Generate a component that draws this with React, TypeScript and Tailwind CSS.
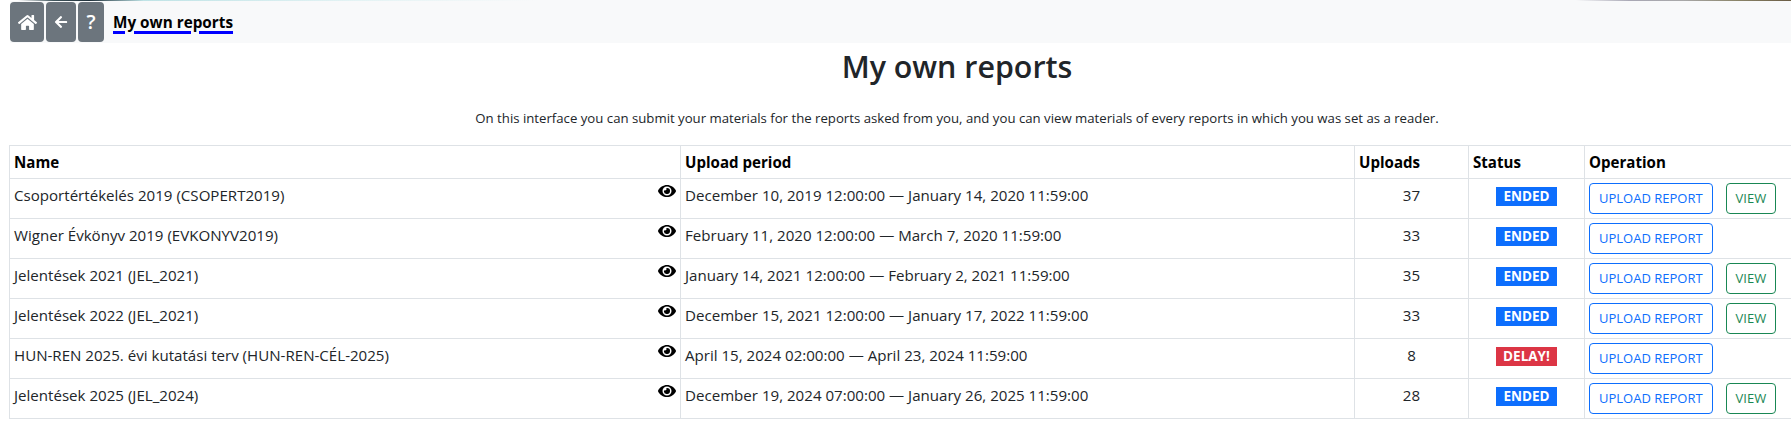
import { FaHome, FaArrowLeft, FaEye } from "react-icons/fa";

const ROWS = [
  { name: "Csoportértékelés 2019 (CSOPERT2019)", period: "December 10, 2019 12:00:00 — January 14, 2020 11:59:00", uploads: 37, status: "ENDED", view: true },
  { name: "Wigner Évkönyv 2019 (EVKONYV2019)", period: "February 11, 2020 12:00:00 — March 7, 2020 11:59:00", uploads: 33, status: "ENDED", view: false },
  { name: "Jelentések 2021 (JEL_2021)", period: "January 14, 2021 12:00:00 — February 2, 2021 11:59:00", uploads: 35, status: "ENDED", view: true },
  { name: "Jelentések 2022 (JEL_2021)", period: "December 15, 2021 12:00:00 — January 17, 2022 11:59:00", uploads: 33, status: "ENDED", view: true },
  { name: "HUN-REN 2025. évi kutatási terv (HUN-REN-CÉL-2025)", period: "April 15, 2024 02:00:00 — April 23, 2024 11:59:00", uploads: 8, status: "DELAY!", view: false },
  { name: "Jelentések 2025 (JEL_2024)", period: "December 19, 2024 07:00:00 — January 26, 2025 11:59:00", uploads: 28, status: "ENDED", view: true },
];

export default function App() {
  return (
    <div className="h-[423px] overflow-hidden bg-white text-[#212529] font-['Open_Sans','Noto_Sans',sans-serif] text-[15.1px]">
      {/* Sliver of the banner image above the nav */}
      <div className="h-px bg-[linear-gradient(90deg,#ffffff_0%,#ffffff_1%,#40555c_3%,#20303a_5%,#bfe3e6_8%,#e4f3f4_20%,#f8f9fa_30%,#f8f9fa_88%,#a9a8b5_91%,#a8a8a8_94%,#8a8468_97%,#6a5c44_100%)]" />

      {/* Nav strip */}
      <div className="h-[42px] ml-[10px] bg-[#f8f9fa] flex items-center gap-[2px]">
        <button className="w-[34px] h-[40px] rounded bg-[#6c757d] text-white flex items-center justify-center"><FaHome size={19} /></button>
        <button className="w-[30px] h-[40px] rounded bg-[#6c757d] text-white flex items-center justify-center"><FaArrowLeft size={14} /></button>
        <button className="w-[26px] h-[40px] rounded bg-[#6c757d] text-white flex items-center justify-center text-[20px] font-semibold">?</button>
        <span className="ml-[7px] text-[15.3px] font-bold text-black underline decoration-[#0000ff] decoration-[3px] underline-offset-[3px]">My own reports</span>
      </div>

      {/* Intro, centred in the column right of the side gutter */}
      <div className="ml-[123px] text-center">
        <h1 className="text-[30.4px] font-semibold leading-[38px] mt-[5px]">My own reports</h1>
        <p className="text-[13.2px] leading-[18px] mt-[23px] mb-[18px]">On this interface you can submit your materials for the reports asked from you, and you can view materials of every reports in which you was set as a reader.</p>
      </div>

      <table className="ml-[9px] w-[1790px] table-fixed border-collapse">
        <thead>
          <tr className="h-[33px] font-bold text-black">
            <th className="w-[671px] border border-[#dee2e6] px-1 text-left">Name</th>
            <th className="w-[674px] border border-[#dee2e6] px-1 text-left">Upload period</th>
            <th className="w-[114px] border border-[#dee2e6] px-1 text-left">Uploads</th>
            <th className="w-[116px] border border-[#dee2e6] px-1 text-left">Status</th>
            <th className="border border-[#dee2e6] px-1 text-left">Operation</th>
          </tr>
        </thead>
        <tbody>
          {ROWS.map((r) => (
            <tr key={r.name} className="h-[40px]">
              <td className="border border-[#dee2e6] px-1">
                <div className="flex items-center justify-between">
                  <span className="-mt-[7px]">{r.name}</span>
                  <FaEye size={18} className="text-black -mt-[14px]" />
                </div>
              </td>
              <td className="border border-[#dee2e6] px-1"><span className="block -mt-[7px]">{r.period}</span></td>
              <td className="border border-[#dee2e6] px-1 text-center"><span className="block -mt-[7px]">{r.uploads}</span></td>
              <td className="border border-[#dee2e6] px-1 text-center">
                <span className={`inline-block -mt-[7px] px-[7px] align-middle text-white font-bold text-[13.5px] leading-[19px] ${r.status === "ENDED" ? "bg-[#0d6efd]" : "bg-[#dc3545]"}`}>{r.status}</span>
              </td>
              <td className="border border-[#dee2e6] px-1">
                <div className="flex items-center gap-[13px]">
                  <button className="h-[31px] px-[9px] rounded border border-[#0d6efd] text-[#0d6efd] text-[13px]">UPLOAD REPORT</button>
                  {r.view && <button className="h-[31px] px-[9px] rounded border border-[#198754] text-[#198754] text-[13px]">VIEW</button>}
                </div>
              </td>
            </tr>
          ))}
        </tbody>
      </table>
    </div>
  );
}
